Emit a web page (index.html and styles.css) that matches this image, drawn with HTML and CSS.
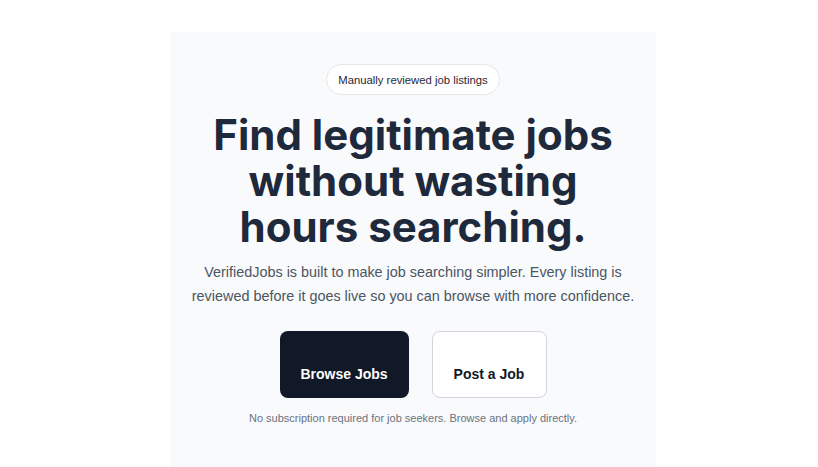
FILE: index.html
```html
<!DOCTYPE html>
<html lang="en">
<head>
<meta charset="utf-8">
<title>VerifiedJobs</title>
<link rel="stylesheet" href="styles.css">
</head>
<body>
<main class="hero">
  <span class="badge">Manually reviewed job listings</span>
  <h1 class="title">Find legitimate jobs without wasting hours searching.</h1>
  <p class="lead">VerifiedJobs is built to make job searching simpler. Every listing is reviewed before it goes live so you can browse with more confidence.</p>
  <div class="actions">
    <a class="btn btn-primary" href="#">Browse Jobs</a>
    <a class="btn btn-secondary" href="#">Post a Job</a>
  </div>
  <p class="note">No subscription required for job seekers. Browse and apply directly.</p>
</main>
</body>
</html>
```
FILE: styles.css
```css
html, body {
  margin: 0;
  padding: 0;
  background: #ffffff;
}
body {
  font-family: "Liberation Sans", Arial, sans-serif;
  height: 467px;
  overflow: hidden;
}
.hero {
  width: 486px;
  margin: 32px 0 0 170px;
  min-height: 435px;
  box-sizing: border-box;
  background: #f9fafb;
  padding: 32px 8px 0;
  display: flex;
  flex-direction: column;
  align-items: center;
  text-align: center;
}
.badge {
  display: inline-flex;
  align-items: center;
  height: 31px;
  box-sizing: border-box;
  padding: 0 11px;
  border: 1px solid #e5e7eb;
  border-radius: 999px;
  background: #ffffff;
  font-size: 11.3px;
  color: #1f2937;
}
.title {
  margin: 17px 0 0;
  font-family: Inter, "Noto Sans", sans-serif;
  font-weight: 700;
  font-size: 42px;
  line-height: 46px;
  letter-spacing: 0;
  color: #1e293b;
  max-width: 420px;
}
.lead {
  margin: 10px 0 0;
  font-size: 14.4px;
  line-height: 24px;
  color: #4b5563;
}
.actions {
  display: flex;
  gap: 23px;
  margin-top: 23px;
}
.btn {
  display: flex;
  align-items: flex-end;
  justify-content: center;
  height: 67px;
  box-sizing: border-box;
  padding: 0 0 16px;
  border-radius: 8px;
  font-size: 14px;
  font-weight: 700;
  white-space: nowrap;
  text-decoration: none;
}
.btn-primary {
  background: #111827;
  color: #ffffff;
  width: 129px;
}
.btn-secondary {
  background: #ffffff;
  color: #111827;
  border: 1px solid #d1d5db;
  width: 115px;
  padding-bottom: 15px;
}
.note {
  margin: 14px 0 0;
  font-size: 11px;
  color: #6b7280;
}
```
